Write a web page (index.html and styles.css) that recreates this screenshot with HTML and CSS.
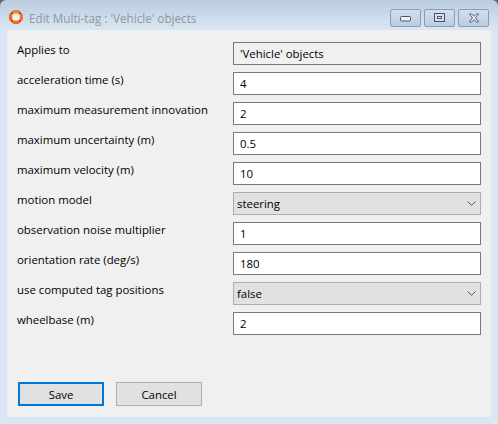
FILE: index.html
```html
<!DOCTYPE html>
<html lang="en">
<head>
    <meta charset="UTF-8">
    <title>Edit Multi-tag : 'Vehicle' objects</title>
    <link rel="stylesheet" href="styles.css">
</head>
<body>
    <div class="window">
        <div class="titlebar">
            <svg class="app-icon" width="14" height="14" viewBox="0 0 14 14">
                <circle cx="7" cy="7" r="5.3" fill="none" stroke="#c8400c" stroke-width="3"/>
                <rect x="3.5" y="0.2" width="7" height="3" rx="1" fill="#f47a2c"/>
                <rect x="3.5" y="10.800" width="7" height="3" rx="1" fill="#ee6a1e"/>
                <rect x="0.2" y="3.5" width="3" height="7" rx="1" fill="#ee6a1e"/>
                <rect x="10.800" y="3.5" width="3" height="7" rx="1" fill="#f47a2c"/>
                <rect x="3.4" y="3.4" width="7.2" height="7.2" rx="1.500" fill="#f4f0ea"/>
            </svg>
            <span class="title">Edit Multi-tag : 'Vehicle' objects</span>
            <div class="caption-buttons">
                <div class="caption-btn">
                    <svg width="12" height="7" viewBox="0 0 12 7"><rect x="0.5" y="1.5" width="10" height="4.5" rx="1" fill="#eef1f5" stroke="#4a5566"/></svg>
                </div>
                <div class="caption-btn">
                    <svg width="12" height="10" viewBox="0 0 12 10"><rect x="0.5" y="0.5" width="10" height="8" fill="#d5deea" stroke="#4a5566"/><rect x="3.5" y="3.5" width="4" height="2" fill="#eef1f5" stroke="#4a5566"/></svg>
                </div>
                <div class="caption-btn">
                    <svg width="12" height="10" viewBox="0 0 12 10"><path d="M1.5 1h2l2.5 2.2L8.500 1h2L7.500 5l3 4h-2L6 6.800 3.500 9h-2l3-4z" fill="#eef1f5" stroke="#4a5566" stroke-width="0.9"/></svg>
                </div>
            </div>
        </div>
        <div class="client">
            <div class="form">
                <label>Applies to</label>
                <div class="field readonly">'Vehicle' objects</div>
                <label>acceleration time (s)</label>
                <div class="field">4</div>
                <label>maximum measurement innovation</label>
                <div class="field">2</div>
                <label>maximum uncertainty (m)</label>
                <div class="field">0.5</div>
                <label>maximum velocity (m)</label>
                <div class="field">10</div>
                <label>motion model</label>
                <div class="field select">steering
                    <svg width="9" height="5" viewBox="0 0 9 5"><path d="M0.500 0.500 4.500 4.300 8.500 0.500" fill="none" stroke="#555"/></svg>
                </div>
                <label>observation noise multiplier</label>
                <div class="field">1</div>
                <label>orientation rate (deg/s)</label>
                <div class="field">180</div>
                <label>use computed tag positions</label>
                <div class="field select">false
                    <svg width="9" height="5" viewBox="0 0 9 5"><path d="M0.500 0.500 4.500 4.300 8.500 0.500" fill="none" stroke="#555"/></svg>
                </div>
                <label>wheelbase (m)</label>
                <div class="field">2</div>
            </div>
            <div class="buttons">
                <button class="button default">Save</button>
                <button class="button">Cancel</button>
            </div>
        </div>
    </div>
</body>
</html>
```

FILE: styles.css
```css
*{
    margin: 0;
    padding: 0;
    box-sizing: border-box;
}
body{
    width: 498px;
    height: 424px;
    overflow: hidden;
    background-color: #5f6670;
    font-family: "Open Sans", "Noto Sans", sans-serif;
    font-size: 11.4px;
    color: black;
}
.window{
    width: 498px;
    height: 424px;
    display: flex;
    flex-direction: column;
    padding: 0 7px 7px 7px;
    border-radius: 6px 6px 0 0;
    background-image: linear-gradient(180deg, #bccde0, #dae6f3 30px);
    background-color: #dae6f3;
}
.titlebar{
    height: 30px;
    display: flex;
    align-items: center;
    flex-shrink: 0;
}
.app-icon{
    margin: 4px 6px 0 2px;
}
.title{
    color: #8f979f;
    font-size: 11.7px;
    margin-top: 5px;
}
.caption-buttons{
    margin-left: auto;
    margin-right: 2px;
    margin-top: 6px;
    display: flex;
    gap: 3px;
}
.caption-btn{
    width: 31px;
    height: 18px;
    border: 1px solid #8c9db3;
    border-radius: 2px;
    background-image: linear-gradient(180deg, #d3deeb, #bccde0);
    display: flex;
    align-items: center;
    justify-content: center;
}
.client{
    flex: 1;
    background-color: #f0f0f0;
    padding: 12px 10px 11px 10px;
    display: flex;
    flex-direction: column;
    justify-content: space-between;
}
.form{
    display: grid;
    grid-template-columns: 216px 248px;
    grid-auto-rows: 23px;
    row-gap: 7px;
}
label{
    line-height: 16px;
}
.field{
    border: 1px solid #7a7a7a;
    background-color: white;
    padding: 0 6px;
    line-height: 22px;
    display: flex;
    align-items: center;
}
.readonly{
    background-color: #f0f0f0;
}
.select{
    background-color: #e1e1e1;
    border-color: #adadad;
    justify-content: space-between;
    padding: 0 4px 0 3px;
}
.buttons{
    display: flex;
    gap: 12px;
    padding-left: 1px;
}
.button{
    width: 86px;
    height: 24px;
    font-family: inherit;
    font-size: 11.4px;
    background-color: #e1e1e1;
    border: 1px solid #adadad;
    color: black;
}
.default{
    border: 2px solid #0078d7;
}
```
